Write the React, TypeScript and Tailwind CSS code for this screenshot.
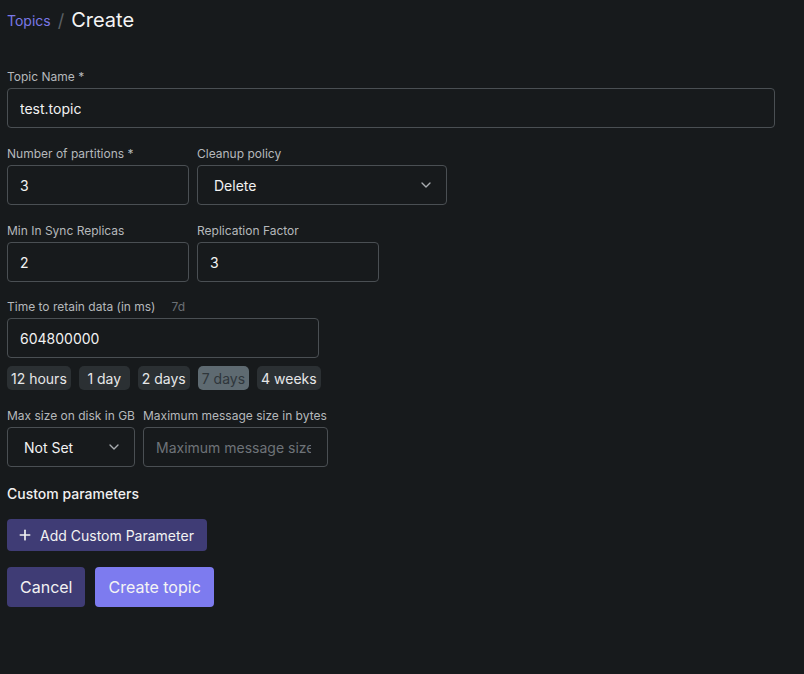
import { ChevronDown, Plus } from "lucide-react";

const font = { fontFamily: "Inter, 'Noto Sans', sans-serif" };

function Label({ children, hint }: { children: React.ReactNode; hint?: string }) {
  return (
    <div className="flex items-center gap-4 h-[14px] mb-[4px] text-[12px] text-[#b5b8bb] leading-none">
      <span>{children}</span>
      {hint && <span className="text-[#6b7075]">{hint}</span>}
    </div>
  );
}

function Field({ value, width, placeholder }: { value?: string; width: string; placeholder?: string }) {
  return (
    <div className={`${width} h-[40px] flex items-center pl-3 pr-4 rounded border border-[#4a4f53] bg-[#171a1c] text-[14px]`}>
      <div className="overflow-hidden whitespace-nowrap">
        {value ? <span className="text-[#f2f2f2]">{value}</span> : <span className="text-[#6e7378]">{placeholder}</span>}
      </div>
    </div>
  );
}

function Select({ value, width }: { value: string; width: string }) {
  return (
    <div
      className={`${width} h-[40px] flex items-center justify-between pl-4 pr-3 rounded border border-[#4a4f53] bg-[#171a1c] text-[14px] text-[#f2f2f2]`}
    >
      <span>{value}</span>
      <ChevronDown className="size-4 text-[#a9adb1]" strokeWidth={2} />
    </div>
  );
}

const chips = ["12 hours", "1 day", "2 days", "7 days", "4 weeks"];

export default function App() {
  return (
    <div className="min-h-[674px] w-full bg-[#171a1c] px-[7px] pt-[6px]" style={font}>
      <div className="flex items-center h-[28px]">
        <span className="text-[14px] text-[#7a78e6]">Topics</span>
        <span className="text-[18px] text-[#5b6065] mx-[7px]">/</span>
        <span className="text-[20px] text-[#f4f4f4]">Create</span>
      </div>

      <div className="mt-[36px]">
        <Label>Topic Name *</Label>
        <Field value="test.topic" width="w-[768px]" />
      </div>

      <div className="flex gap-2 mt-[19px]">
        <div>
          <Label>Number of partitions *</Label>
          <Field value="3" width="w-[182px]" />
        </div>
        <div>
          <Label>Cleanup policy</Label>
          <Select value="Delete" width="w-[250px]" />
        </div>
      </div>

      <div className="flex gap-2 mt-[19px]">
        <div>
          <Label>Min In Sync Replicas</Label>
          <Field value="2" width="w-[182px]" />
        </div>
        <div>
          <Label>Replication Factor</Label>
          <Field value="3" width="w-[182px]" />
        </div>
      </div>

      <div className="mt-[18px]">
        <Label hint="7d">Time to retain data (in ms)</Label>
        <Field value="604800000" width="w-[312px]" />
        <div className="flex gap-2 mt-[8px]">
          {chips.map((c) => (
            <span
              key={c}
              className={`h-[24px] min-w-[51px] px-[4px] flex items-center justify-center rounded-[5px] text-[14px] ${
                c === "7 days" ? "bg-[#5e6a71] text-[#2f363b]" : "bg-[#2b3033] text-[#e6e7e8]"
              }`}
            >
              {c}
            </span>
          ))}
        </div>
      </div>

      <div className="flex gap-2 mt-[19px]">
        <div>
          <Label>Max size on disk in GB</Label>
          <Select value="Not Set" width="w-[128px]" />
        </div>
        <div>
          <Label>Maximum message size in bytes</Label>
          <Field placeholder="Maximum message size in bytes" width="w-[185px]" />
        </div>
      </div>

      <div className="mt-[16px] text-[14px] font-medium text-[#f0f0f0] h-[20px] flex items-center">Custom parameters</div>

      <button className="mt-[16px] h-[32px] pl-[10px] pr-[13px] flex items-center gap-[7px] rounded bg-[#3f3c75] text-[14px] text-[#f2f2f2]">
        <Plus className="size-4" strokeWidth={2.5} />
        Add Custom Parameter
      </button>

      <div className="flex gap-[10px] mt-[16px]">
        <button className="h-[40px] px-[13px] rounded bg-[#3f3c75] text-[16px] text-[#f2f2f2]">Cancel</button>
        <button className="h-[40px] px-[13px] rounded bg-[#7d7bef] text-[16px] text-[#f4f4f4]">Create topic</button>
      </div>
    </div>
  );
}
